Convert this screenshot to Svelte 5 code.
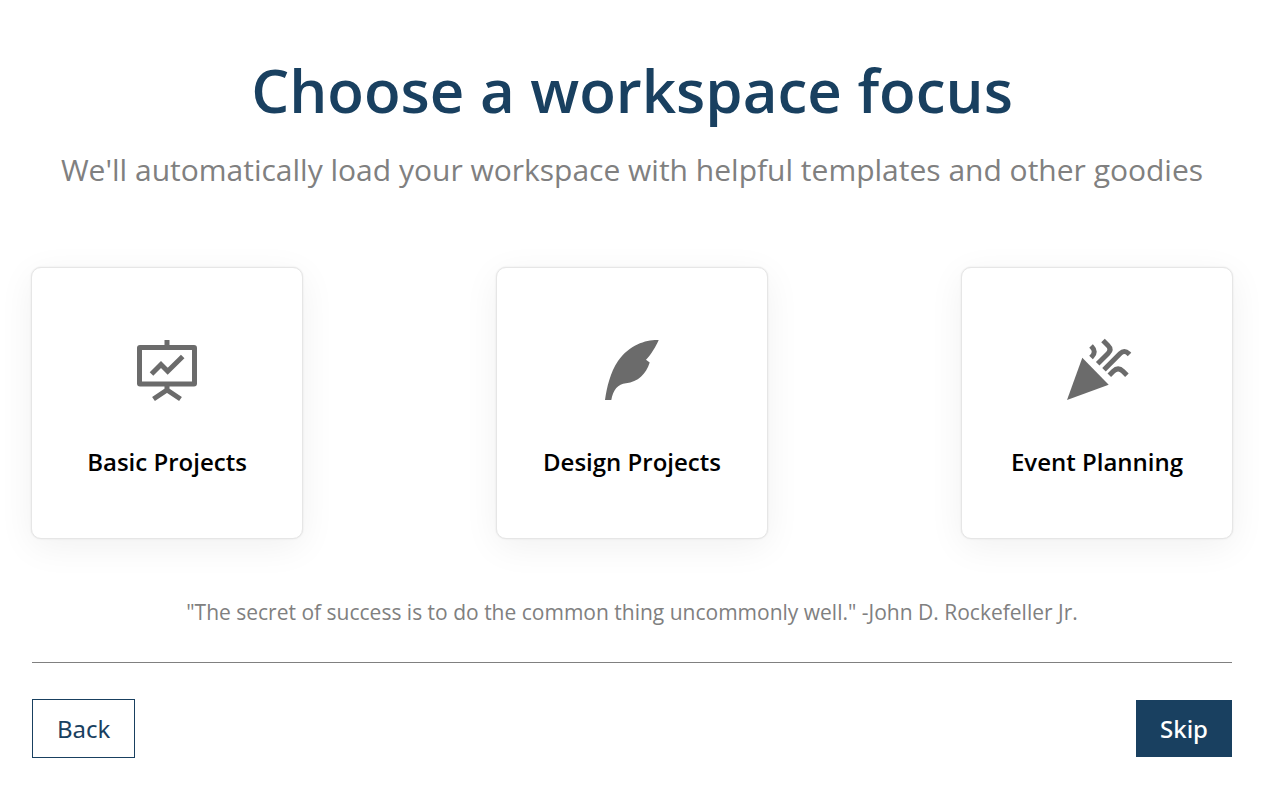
<script>
  const cards = [
    { title: 'Basic Projects', icon: 'board' },
    { title: 'Design Projects', icon: 'feather' },
    { title: 'Event Planning', icon: 'party' }
  ];
</script>

<main>
  <h1>Choose a workspace focus</h1>
  <p class="lead">We'll automatically load your workspace with helpful templates and other goodies</p>
  <div class="cards">
    {#each cards as card}
      <button class="card" type="button">
        <svg viewBox="0 0 72 72" aria-hidden="true">
          {#if card.icon === 'board'}
            <g fill="none" stroke="#6b6b6b" stroke-width="5">
              <rect x="8.500" y="13.500" width="55" height="36.500" rx="0.500" />
              <path d="M36 6v7M36 50v6M22.500 65 36 56l13.500 9M20.500 40l9.500-9.500 6.700 6.700 15-14.700" />
            </g>
          {:else if card.icon === 'feather'}
            <path fill="#6b6b6b" d="M62.700 6C51 5.500 34 10 22 27 14 39 11 53 9 66h6.300C17 56 22 50 30 49.300 42 48 50 40 53.700 28.500L50 25.700C55 21 60 12 62.700 6z" />
          {:else}
            <path fill="#6b6b6b" d="M6 66 21.300 23.700 47.700 50.700z" />
            <path fill="none" stroke="#6b6b6b" stroke-width="5" d="M30 12l1 1c3 3 3 6.500 0 9.500l-1 1M42 6.500l5 5c2.600 2.600 2.600 5.400 0 8L36.700 29.800M68.500 20.500l-1-1c-2.700-2.700-5.600-2.700-8.300 0L43 35.700M48.300 41.200l4-4c3.300-3.300 6.300-3.300 9.600 0l4 4" />
          {/if}
        </svg>
        <span>{card.title}</span>
      </button>
    {/each}
  </div>
  <p class="quote">"The secret of success is to do the common thing uncommonly well." -John D. Rockefeller Jr.</p>
  <footer>
    <button class="back" type="button">Back</button>
    <button class="skip" type="button">Skip</button>
  </footer>
</main>

<style>
  :global(body) { margin: 0; background: #fff; }
  main { padding: 48px 45px 29px 32px; font-family: "Open Sans", sans-serif; text-align: center; }
  h1 { margin: 0; font-size: 60px; line-height: 84px; font-weight: 600; color: #194060; }
  .lead { margin: 14px 0 0; font-size: 30px; line-height: 48px; color: #808080; }
  .cards { display: flex; justify-content: space-between; margin: 73px -1px 0; }
  .card { box-sizing: border-box; width: 272px; height: 272px; padding: 8px 0 0; display: flex; flex-direction: column; align-items: center; justify-content: center; gap: 38px; border: 1px solid #e6e6e6; border-radius: 10px; background: #fff; box-shadow: 0 0 2px rgba(0, 0, 0, 0.1), 0 8px 36px rgba(0, 0, 0, 0.06); font: 600 24px/36px "Open Sans", sans-serif; color: #000; }
  .card svg { width: 72px; height: 72px; }
  .quote { margin: 56px 0 0; font-size: 21px; line-height: 34px; color: #808080; }
  footer { display: flex; justify-content: space-between; align-items: center; margin-top: 33px; padding-top: 36px; border-top: 1px solid #808080; }
  footer button { padding: 10px 24px; border: 0; font: 400 24px/37px "Noto Sans", sans-serif; }
  footer .back { border: 1px solid #194060; background: #fff; color: #194060; }
  footer .skip { background: #194060; color: #fff; font-weight: 500; }
</style>
